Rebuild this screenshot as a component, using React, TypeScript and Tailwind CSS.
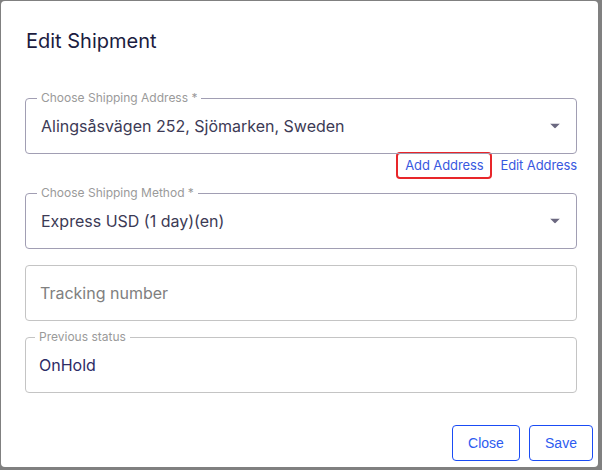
import React from "react";

function Arrow() {
  return (
    <svg width="10" height="5" viewBox="0 0 10 5" className="absolute right-[16px] top-1/2 -translate-y-1/2">
      <path d="M0 0 L10 0 L5 5 Z" fill="#6b6880" />
    </svg>
  );
}

function Field({
  label,
  value,
  select,
  borderClass,
  valueClass,
  labelClass,
  padClass,
}: {
  label?: string;
  value: string;
  select?: boolean;
  borderClass: string;
  valueClass: string;
  labelClass: string;
  padClass: string;
}) {
  return (
    <div className={`relative h-[56px] w-[552px] rounded-[4px] border ${borderClass}`}>
      {label && (
        <span className={`absolute -top-[9px] bg-white px-[4px] text-[12px] leading-[16px] text-[#9a9a9a] ${labelClass}`}>
          {label}
        </span>
      )}
      <div className={`flex h-full items-center text-[16px] ${padClass} ${valueClass}`}>{value}</div>
      {select && <Arrow />}
    </div>
  );
}

export default function App() {
  return (
    <div className="h-[470px] w-[602px] bg-[#808080] pl-px pt-px" style={{ fontFamily: "Inter, 'Noto Sans', sans-serif" }}>
      <div className="flex h-[466px] w-[597px] flex-col rounded-[4px] bg-white">
        <div className="pl-[25px] pt-[28px] text-[20px] leading-[24px] text-[#1b1c3f]">Edit Shipment</div>
        <div className="mt-[45px] flex flex-col pl-[24px]">
          <Field
            label="Choose Shipping Address *"
            value="Alingsåsvägen 252, Sjömarken, Sweden"
            select
            borderClass="border-[#a19eb3]"
            valueClass="text-[#3c3a55]"
            labelClass="left-[11px]"
            padClass="pl-[15px]"
          />
          <div className="flex h-[39px] w-[552px] items-start justify-end gap-[8px] text-[13px] text-[#3858e0]">
            <span className="-mt-[2px] rounded-[4px] border-2 border-[#e8262a] px-[7px] leading-[23px] tracking-[-0.1px]">Add Address</span>
            <span className="pt-[0px] leading-[23px] tracking-[-0.1px]">Edit Address</span>
          </div>
          <Field
            label="Choose Shipping Method *"
            value="Express USD (1 day)(en)"
            select
            borderClass="border-[#a19eb3]"
            valueClass="text-[#3c3a55]"
            labelClass="left-[11px]"
            padClass="pl-[15px]"
          />
          <div className="mt-[16px]">
            <Field
              value="Tracking number"
              borderClass="border-[#c4c4c4]"
              valueClass="text-[#808080]"
              labelClass="left-[9px]"
              padClass="pl-[14px]"
            />
          </div>
          <div className="mt-[16px]">
            <Field
              label="Previous status"
              value="OnHold"
              borderClass="border-[#c4c4c4]"
              valueClass="text-[#2e2b66]"
              labelClass="left-[9px]"
              padClass="pl-[13px]"
            />
          </div>
        </div>
        <div
          className="mt-auto flex justify-end gap-[9px] pb-[6px] pr-[5px]"
          style={{ fontFamily: "'Liberation Sans', Arial, sans-serif" }}
        >
          <button className="h-[36px] w-[68px] rounded-[4px] border border-[#1a4cf5] text-[14px] text-[#2d5bf0]">Close</button>
          <button className="h-[36px] w-[64px] rounded-[4px] border border-[#1a4cf5] text-[14px] text-[#2d5bf0]">Save</button>
        </div>
      </div>
    </div>
  );
}
